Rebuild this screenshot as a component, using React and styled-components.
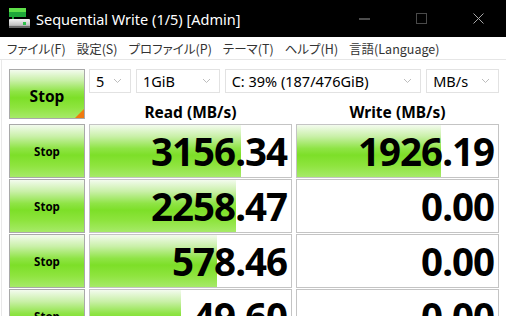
import React from "react";
import styled, { createGlobalStyle } from "styled-components";

const GlobalStyle = createGlobalStyle`
  html, body { margin: 0; padding: 0; background: #ffffff; overflow: hidden; }
  body { font-family: "Noto Sans", "Noto Sans CJK JP", sans-serif; }
`;

const Window = styled.div`
  width: 506px;
  height: 316px;
  display: flex;
  flex-direction: column;
  background: #ffffff;
  overflow: hidden;
`;

const TitleBar = styled.div`
  height: 37px;
  flex: none;
  background: #000000;
  display: flex;
  align-items: center;
`;

const AppIcon = styled.svg`
  margin-left: 9px;
  flex: none;
`;

const Title = styled.div`
  margin-left: 5px;
  color: #ffffff;
  font-family: "Noto Sans", sans-serif;
  font-size: 14.5px;
  flex: 1;
  white-space: nowrap;
`;

const Controls = styled.div`
  display: flex;
  height: 100%;
  margin-right: -1px;
`;

const CtrlButton = styled.div`
  width: 57px;
  height: 100%;
  display: flex;
  align-items: center;
  justify-content: center;
`;

const MenuBar = styled.div`
  height: 22px;
  flex: none;
  display: flex;
  align-items: center;
  gap: 11px;
  padding-left: 7px;
  border-bottom: 1px solid #e6e6e6;
  font-family: "Noto Sans CJK JP", sans-serif;
  font-feature-settings: "palt";
  font-size: 12.5px;
  color: #333333;
`;

const MenuItem = styled.span`
  white-space: nowrap;
`;

const Main = styled.div`
  flex: 1;
  padding: 9px 0 0 7px;
  margin-left: 1px;
  border-left: 1px solid #e8e8e8;
  display: flex;
  flex-direction: column;
  gap: 5px;
`;

const Row = styled.div`
  display: grid;
  grid-template-columns: 76px 203px 203px;
  column-gap: 4px;
  height: ${(p) => p.$h}px;
  flex: none;
`;

const greenGradient = `linear-gradient(to bottom, #f3fbee 0%, #c9f0a8 22%, #8fe446 45%, #7ddf28 58%, #8ee43e 78%, #a6ea68 100%)`;

const StopButton = styled.div`
  box-sizing: border-box;
  position: relative;
  border: 1px solid #a9a9a9;
  background: ${greenGradient};
  display: flex;
  align-items: center;
  justify-content: center;
  padding-top: ${(p) => (p.$big ? 3 : 1)}px;
  font-family: "Noto Sans", sans-serif;
  font-weight: 700;
  font-size: ${(p) => (p.$big ? 15.5 : 11.5)}px;
  color: #000000;
  height: 100%;
  overflow: hidden;
`;

const Corner = styled.div`
  position: absolute;
  right: 0;
  bottom: 0;
  width: 0;
  height: 0;
  border-style: solid;
  border-width: 0 0 9px 9px;
  border-color: transparent transparent #f07a10 transparent;
`;

const TopRight = styled.div`
  grid-column: 2 / 4;
  display: flex;
  flex-direction: column;
`;

const ComboRow = styled.div`
  display: flex;
  gap: 5px;
  height: 24px;
`;

const Combo = styled.div`
  box-sizing: border-box;
  width: ${(p) => p.$w}px;
  height: 24px;
  border: 1px solid #e2e2e2;
  background: #ffffff;
  display: flex;
  align-items: center;
  padding-left: 6px;
  font-family: "Noto Sans", sans-serif;
  font-size: 14.5px;
  color: #000000;
`;

const ComboText = styled.span`
  flex: 1;
  white-space: nowrap;
  overflow: hidden;
`;

const Chevron = styled.svg`
  flex: none;
  margin: 0 8px 0 4px;
`;

const Headers = styled.div`
  flex: 1;
  display: grid;
  grid-template-columns: 203px 203px;
  column-gap: 4px;
  align-items: end;
`;

const Header = styled.div`
  text-align: center;
  font-family: "Noto Sans", sans-serif;
  font-weight: 700;
  font-size: 15.5px;
  color: #000000;
  line-height: 22px;
  margin-bottom: -4px;
`;

const Cell = styled.div`
  box-sizing: border-box;
  border: 1px solid #c4c4c4;
  background-color: #ffffff;
  background-image: ${greenGradient};
  background-repeat: no-repeat;
  background-size: ${(p) => p.$fill}px 100%;
  display: flex;
  align-items: center;
  justify-content: flex-end;
  padding-right: 4px;
  font-family: "Noto Sans", sans-serif;
  font-weight: 700;
  font-size: 38.5px;
  letter-spacing: -1px;
  color: #000000;
  height: 100%;
`;

const ChevronIcon = () => (
  <Chevron width="9" height="6" viewBox="0 0 9 6">
    <path d="M1 1 L4.5 4.5 L8 1" fill="none" stroke="#bdbdbd" strokeWidth="1" />
  </Chevron>
);

const rows = [
  { read: "3156.34", readFill: 151, write: "1926.19", writeFill: 144 },
  { read: "2258.47", readFill: 146, write: "0.00", writeFill: 0 },
  { read: "578.46", readFill: 127, write: "0.00", writeFill: 0 },
  { read: "49.60", readFill: 91, write: "0.00", writeFill: 0 },
];

export default function App() {
  return (
    <Window>
      <GlobalStyle />
      <TitleBar>
        <AppIcon width="22" height="22" viewBox="0 0 22 22">
          <rect x="0" y="0" width="17" height="4" fill="#5fe04a" />
          <rect x="0" y="4" width="17" height="5" fill="#1fa83a" />
          <rect x="3" y="9" width="2" height="2" fill="#1fa83a" />
          <defs>
            <linearGradient id="drv" x1="0" y1="0" x2="0" y2="1">
              <stop offset="0" stopColor="#f4f4f4" />
              <stop offset="0.6" stopColor="#c8c8c8" />
              <stop offset="1" stopColor="#8a8a8a" />
            </linearGradient>
          </defs>
          <rect x="0" y="11" width="21" height="9" rx="1" fill="url(#drv)" />
          <rect x="0" y="18" width="21" height="2" fill="#6a6a6a" />
          <rect x="14" y="14" width="3" height="3" fill="#2fc04a" />
        </AppIcon>
        <Title>Sequential Write (1/5) [Admin]</Title>
        <Controls>
          <CtrlButton>
            <svg width="11" height="2" viewBox="0 0 11 2"><rect x="0" y="0.5" width="11" height="1" fill="#9a9a9a" /></svg>
          </CtrlButton>
          <CtrlButton>
            <svg width="11" height="11" viewBox="0 0 11 11"><rect x="0.5" y="0.5" width="10" height="10" fill="none" stroke="#4a4a4a" strokeWidth="1" /></svg>
          </CtrlButton>
          <CtrlButton>
            <svg width="11" height="11" viewBox="0 0 11 11"><path d="M0.5 0.5 L10.5 10.5 M10.5 0.5 L0.5 10.5" stroke="#a8a8a8" strokeWidth="1" /></svg>
          </CtrlButton>
        </Controls>
      </TitleBar>
      <MenuBar>
        <MenuItem>ファイル(F)</MenuItem>
        <MenuItem>設定(S)</MenuItem>
        <MenuItem>プロファイル(P)</MenuItem>
        <MenuItem>テーマ(T)</MenuItem>
        <MenuItem>ヘルプ(H)</MenuItem>
        <MenuItem>言語(Language)</MenuItem>
      </MenuBar>
      <Main>
        <Row $h={50}>
          <StopButton $big>
            Stop
            <Corner />
          </StopButton>
          <TopRight>
            <ComboRow>
              <Combo $w={42}><ComboText>5</ComboText><ChevronIcon /></Combo>
              <Combo $w={84}><ComboText>1GiB</ComboText><ChevronIcon /></Combo>
              <Combo $w={197}><ComboText>C: 39% (187/476GiB)</ComboText><ChevronIcon /></Combo>
              <Combo $w={73}><ComboText>MB/s</ComboText><ChevronIcon /></Combo>
            </ComboRow>
            <Headers>
              <Header>Read (MB/s)</Header>
              <Header>Write (MB/s)</Header>
            </Headers>
          </TopRight>
        </Row>
        {rows.map((r, i) => (
          <Row $h={50} key={i}>
            <StopButton>Stop</StopButton>
            <Cell $fill={r.readFill}>{r.read}</Cell>
            <Cell $fill={r.writeFill}>{r.write}</Cell>
          </Row>
        ))}
      </Main>
    </Window>
  );
}
